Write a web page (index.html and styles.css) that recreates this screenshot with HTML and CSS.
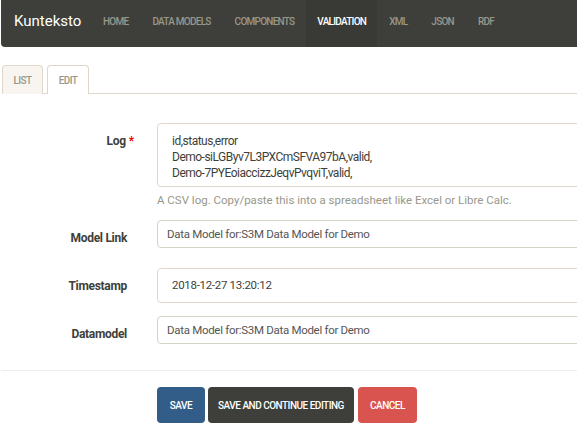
FILE: index.html
```html
<!DOCTYPE html>
<html>
<head>
<meta charset="utf-8">
<link rel="stylesheet" href="styles.css">
</head>
<body>
<div class="page">
  <nav class="navbar">
    <span class="brand">Kunteksto</span>
    <ul class="nav">
      <li><a>Home</a></li>
      <li><a>Data Models</a></li>
      <li><a>Components</a></li>
      <li class="active"><a>Validation</a></li>
      <li><a>XML</a></li>
      <li><a>JSON</a></li>
      <li><a>RDF</a></li>
    </ul>
  </nav>

  <ul class="tabs">
    <li class="tab list">List</li>
    <li class="tab edit">Edit</li>
  </ul>

  <form class="form">
    <div class="row row-log">
      <label class="label">Log<span class="req">*</span></label>
      <div class="field">
        <div class="textarea"><div class="ta-inner">id,status,error<br>Demo-siLGByv7L3PXCmSFVA97bA,valid,<br>Demo-7PYEoiaccizzJeqvPvqviT,valid,</div></div>
        <p class="help">A CSV log. Copy/paste this into a spreadsheet like Excel or Libre Calc.</p>
      </div>
    </div>
    <div class="row row-link">
      <label class="label">Model Link</label>
      <div class="field"><div class="input small">Data Model for:S3M Data Model for Demo</div></div>
    </div>
    <div class="row row-ts">
      <label class="label">Timestamp</label>
      <div class="field"><div class="input big">2018-12-27 13:20:12</div></div>
    </div>
    <div class="row row-dm">
      <label class="label">Datamodel</label>
      <div class="field"><div class="input small">Data Model for:S3M Data Model for Demo</div></div>
    </div>
  </form>

  <div class="actions">
    <button class="btn btn-primary">Save</button>
    <button class="btn btn-default">Save and continue editing</button>
    <button class="btn btn-danger">Cancel</button>
  </div>
</div>
</body>
</html>
```

FILE: styles.css
```css
* { box-sizing: border-box; }
html, body { margin: 0; padding: 0; background: #fff; }
body {
  font-family: Roboto, "Liberation Sans", sans-serif;
  font-size: 12px;
  color: #3e3f3a;
  overflow: hidden;
  width: 577px;
  height: 439px;
}
.page { width: 700px; padding-left: 1px; }

.navbar {
  height: 47px;
  background: #3e3f3a;
  border-radius: 0 0 0 4px;
  display: flex;
  align-items: stretch;
}
.brand {
  color: #fff;
  font-size: 15px;
  line-height: 43px;
  padding-left: 13px;
  width: 90px;
}
.nav { list-style: none; margin: 0; padding: 0; display: flex; }
.nav li { display: flex; }
.nav a {
  display: block;
  padding: 0 12px;
  line-height: 43px;
  font-size: 10px;
  font-weight: 500;
  letter-spacing: -0.75px;
  text-transform: uppercase;
  color: #98978b;
}
.nav li.active { background: #393a35; }
.nav li.active a { color: #fff; padding: 0 11px; }

.tabs {
  list-style: none;
  margin: 18px 0 0 1px;
  padding: 0;
  display: flex;
  gap: 4px;
  border-bottom: 1px solid #dfd7ca;
  height: 29px;
}
.tab {
  height: 29px;
  border: 1px solid #dfd7ca;
  border-bottom: none;
  border-radius: 4px 4px 0 0;
  font-size: 10px;
  font-weight: 500;
  letter-spacing: -0.6px;
  text-transform: uppercase;
  color: #98978b;
  line-height: 29px;
  text-align: center;
}
.tab.list { width: 41px; background: #f8f5f0; }
.tab.edit { width: 42px; background: #fff; }

.form { padding-top: 29px; }
.row {
  display: grid;
  grid-template-columns: 126px 1fr;
  column-gap: 30px;
}
.label {
  text-align: right;
  font-weight: 700;
  font-size: 12px;
  line-height: 16px;
  padding-top: 10px;
  color: #3e3f3a;
  letter-spacing: -0.3px;
}
.req { color: #e00; margin-left: 3px; margin-right: -7px; }

.textarea {
  height: 64px;
  border: 1px solid #dfd7ca;
  border-radius: 4px;
  padding: 9px 14px 0;
  overflow: hidden;
}
.ta-inner {
  line-height: 16px;
  font-size: 12px;
  letter-spacing: -0.5px;
  color: #3e3f3a;
}
.help {
  margin: 5px 0 0;
  font-size: 11.5px;
  line-height: 16px;
  color: #98978b;
  letter-spacing: 0;
}
.row-link { margin-top: 12px; }
.row-ts { margin-top: 20px; }
.row-dm { margin-top: 13px; }

.input {
  border: 1px solid #dfd7ca;
  border-radius: 4px;
  font-size: 11.5px;
  letter-spacing: -0.3px;
}
.input.small {
  height: 28px;
  line-height: 26px;
  padding-left: 9px;
  color: #555;
  border-color: #d6d2ca;
}
.input.big {
  height: 35px;
  line-height: 33px;
  padding-left: 14px;
  color: #3e3f3a;
}

.actions {
  margin-top: 26px;
  border-top: 1px solid #eeeeee;
  padding: 16px 0 0 156px;
  display: flex;
  gap: 3px;
}
.btn {
  height: 36px;
  border: none;
  border-radius: 4px;
  font-family: Roboto, "Liberation Sans", sans-serif;
  font-size: 10px;
  font-weight: 500;
  letter-spacing: -0.5px;
  text-transform: uppercase;
  color: #fff;
  padding: 0;
}
.btn-primary { background: #325d88; width: 48px; }
.btn-default { background: #3e3f3a; width: 146px; }
.btn-danger { background: #d9534f; width: 59px; margin-left: 1px; }
```
